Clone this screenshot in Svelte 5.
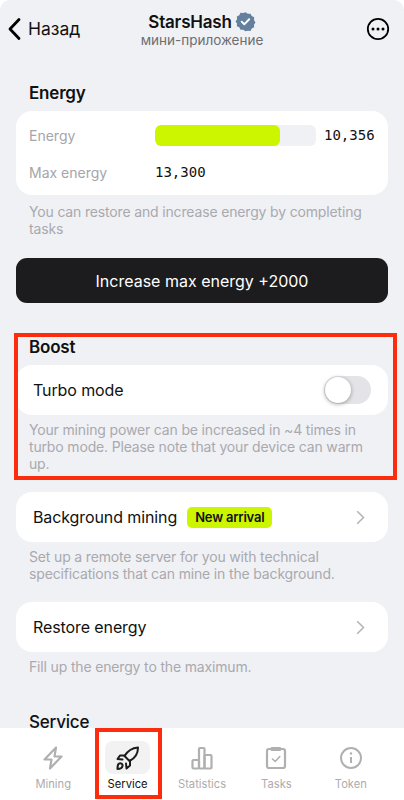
<script>
  const tabs = [
    { label: 'Mining', icon: 'bolt' },
    { label: 'Service', icon: 'rocket', active: true },
    { label: 'Statistics', icon: 'chart' },
    { label: 'Tasks', icon: 'task' },
    { label: 'Token', icon: 'info' }
  ];
</script>

<div class="screen">
  <header class="top">
    <div class="back">
      <svg width="14" height="24" viewBox="0 0 14 24"><path d="M12 2.5 L3 12 L12 21.5" fill="none" stroke="#000" stroke-width="2.8" stroke-linecap="round" stroke-linejoin="round"/></svg>
      <span>Назад</span>
    </div>
    <div class="title">
      <div class="name">StarsHash
        <svg width="21" height="21" viewBox="0 0 24 24"><path d="M12 1.5l2.6 1.7 3.1-.2 1.4 2.8 2.8 1.4-.2 3.1 1.7 2.7-1.7 2.6.2 3.1-2.8 1.4-1.4 2.8-3.1-.2L12 23l-2.6-1.7-3.1.2-1.4-2.8-2.8-1.4.2-3.1L.6 12l1.7-2.7-.2-3.1 2.8-1.4 1.4-2.8 3.1.2z" fill="#64809f"/><path d="M7.6 12.2l3 3 5.6-5.8" fill="none" stroke="#fff" stroke-width="2.2" stroke-linecap="round" stroke-linejoin="round"/></svg>
      </div>
      <div class="sub">мини-приложение</div>
    </div>
    <svg class="more" width="24" height="24" viewBox="0 0 24 24"><circle cx="12" cy="12" r="10.2" fill="none" stroke="#000" stroke-width="1.8"/><circle cx="7" cy="12" r="1.5"/><circle cx="12" cy="12" r="1.5"/><circle cx="17" cy="12" r="1.5"/></svg>
  </header>

  <main class="content">
    <h2 class="h-energy">Energy</h2>
    <section class="card stats">
      <div class="stat">
        <span class="lbl">Energy</span>
        <div class="bar"><div class="fill" style="width:{(10356 / 13300) * 100}%"></div></div>
        <span class="num">10,356</span>
      </div>
      <div class="stat">
        <span class="lbl">Max energy</span>
        <span class="num">13,300</span>
      </div>
    </section>
    <p class="note n-energy">You can restore and increase energy by completing tasks</p>
    <button class="cta">Increase max energy +2000</button>

    <h2 class="h-boost">Boost</h2>
    <section class="card row">
      <span>Turbo mode</span>
      <span class="toggle"><i></i></span>
    </section>
    <p class="note">Your mining power can be increased in ~4 times in turbo mode. Please note that your device can warm up.</p>

    <section class="card row gap1">
      <span class="rowmain">Background mining <b class="badge">New arrival</b></span>
      <svg class="chev" width="9" height="15" viewBox="0 0 9 15"><path d="M1.2 1.2 L7.5 7.5 L1.2 13.8" fill="none" stroke="#b3b3b8" stroke-width="1.5"/></svg>
    </section>
    <p class="note">Set up a remote server for you with technical specifications that can mine in the background.</p>

    <section class="card row gap2">
      <span>Restore energy</span>
      <svg class="chev" width="9" height="15" viewBox="0 0 9 15"><path d="M1.2 1.2 L7.5 7.5 L1.2 13.8" fill="none" stroke="#b3b3b8" stroke-width="1.5"/></svg>
    </section>
    <p class="note">Fill up the energy to the maximum.</p>

    <h2 class="h-service">Service</h2>
  </main>

  <nav class="tabs">
    {#each tabs as t}
      <div class="tab" class:active={t.active}>
        <div class="ico">
          {#if t.icon === 'bolt'}
            <svg width="24" height="26" viewBox="0 0 24 26"><path d="M15 2.5 L3.5 14.5 H10.5 L9 23.5 L20.5 11.5 H13.5 Z" fill="none" stroke="#b0b0b0" stroke-width="2.2" stroke-linejoin="round"/></svg>
          {:else if t.icon === 'rocket'}
            <svg width="26" height="26" viewBox="0 0 26 26" fill="none" stroke="#1c1c1c" stroke-width="2" stroke-linejoin="round" stroke-linecap="round"><path d="M23 2.5 C17 3 12.5 6 9.5 11 L14.5 16 C19.5 13.5 23 9 23 2.5 Z"/><path d="M10 10.5 L5 10.5 L2.5 14 L7.5 14.5"/><path d="M15 15.5 V20.5 L11.5 23.5 L11 18.5"/><path d="M3.5 19 C5.5 17.5 8 19 7.5 21 C7 23.5 4 24 2.5 24 C2.5 22 2.5 20 3.5 19 Z"/></svg>
          {:else if t.icon === 'chart'}
            <svg width="24" height="26" viewBox="0 0 24 26" fill="none" stroke="#b0b0b0" stroke-width="2.2" stroke-linejoin="round"><rect x="2.5" y="15" width="6.5" height="8.5" rx="1"/><rect x="9" y="3" width="5.5" height="20.5" rx="1"/><rect x="14.5" y="10" width="7" height="13.5" rx="1"/></svg>
          {:else if t.icon === 'task'}
            <svg width="22" height="26" viewBox="0 0 22 26" fill="none" stroke="#b0b0b0" stroke-width="2.2" stroke-linejoin="round" stroke-linecap="round"><rect x="2" y="4" width="18" height="19" rx="2"/><rect x="6.5" y="2.5" width="9" height="3" fill="#b0b0b0" stroke-width="1"/><path d="M7.5 14 L10.2 16.5 L14.8 11.5" stroke-width="1.6"/></svg>
          {:else}
            <svg width="24" height="24" viewBox="0 0 24 24" fill="none" stroke="#b0b0b0" stroke-width="2"><circle cx="12" cy="12" r="10"/><path d="M12 11 V17" stroke-width="2"/><circle cx="12" cy="7.5" r="1.2" fill="#b0b0b0" stroke="none"/></svg>
          {/if}
        </div>
        <span>{t.label}</span>
      </div>
    {/each}
  </nav>

  <div class="mark mark-boost"></div>
  <div class="mark mark-tab"></div>
</div>

<style>
  :global(body) { margin: 0; background: #fff; }
  .screen {
    position: relative; width: 404px; height: 800px; overflow: hidden;
    display: flex; flex-direction: column; background: #f0f1f5;
    border-radius: 10px 10px 0 0;
    font-family: Inter, "Liberation Sans", sans-serif; color: #111;
  }
  .top {
    flex: none; height: 56px; display: flex; align-items: center;
    justify-content: space-between; padding: 0 14px 0 7px; position: relative;
  }
  .back { display: flex; align-items: center; gap: 7px; font-size: 17.5px; margin-top: 1px; }
  .title { position: absolute; left: 0; right: 0; top: 11px; text-align: center; }
  .name {
    display: flex; justify-content: center; align-items: center; gap: 3px;
    font-size: 17px; font-weight: 600; line-height: 20px; letter-spacing: -0.2px;
  }
  .sub { font-size: 13.5px; line-height: 16px; color: #6d6d72; }
  .more { margin-top: 2px; position: relative; }
  .content { flex: 1; min-height: 0; padding: 0 16px; overflow: hidden; }
  h2 { margin: 0 0 0 13px; font-size: 17px; font-weight: 600; line-height: 20px; letter-spacing: -0.2px; }
  .h-energy { margin-top: 27px; margin-bottom: 8px; }
  .h-boost { margin-top: 34px; margin-bottom: 8px; }
  .h-service { margin-top: 41px; font-weight: 500; line-height: 12px; }
  .card { background: #fff; border-radius: 16px; }
  .stats { height: 84px; padding: 6px 12px 0 13px; box-sizing: border-box; display: flex; flex-direction: column; gap: 1px; }
  .stat { display: flex; align-items: center; height: 36px; font-size: 14px; }
  .lbl { width: 126px; flex: none; color: #a5a5aa; font-size: 14px; }
  .bar { width: 161px; height: 21px; background: #f0f1f5; border-radius: 6px; overflow: hidden; margin-right: 8px; }
  .fill { height: 100%; background: #ccf500; border-radius: 6px; }
  .num { font-family: "DejaVu Sans Mono", monospace; font-size: 14px; color: #111; }
  .note { margin: 6px 13px 0; font-size: 14px; line-height: 17px; color: #a9a9ae; letter-spacing: -0.16px; }
  .n-energy { margin-top: 8px; }
  .cta {
    display: block; width: 100%; height: 45px; margin-top: 21px; border: 0; border-radius: 11px;
    background: #1c1c1e; color: #fff; font: 400 16px Inter, "Liberation Sans", sans-serif;
  }
  .row {
    height: 50px; display: flex; align-items: center; justify-content: space-between;
    padding: 0 17px; font-size: 16px; letter-spacing: -0.1px; box-sizing: border-box;
  }
  .rowmain { display: flex; align-items: center; gap: 10px; }
  .chev { margin-right: 6px; }
  .badge {
    font-size: 13px; font-weight: 600; background: #ccf500; border-radius: 5px;
    line-height: 21px; padding: 0 8px; letter-spacing: -0.2px;
  }
  .gap1 { margin-top: 20px; }
  .gap2 { margin-top: 20px; }
  .toggle { width: 47px; height: 28px; border-radius: 14px; background: #e3e3e8; position: relative; }
  .toggle i {
    position: absolute; left: 1px; top: 1px; width: 26px; height: 26px; border-radius: 50%;
    background: #fff; box-shadow: 0 1px 4px rgba(0,0,0,.35);
  }
  .tabs {
    flex: none; height: 72px; background: #fff; display: flex;
    padding: 13px 16px 0; box-sizing: border-box; position: relative;
  }
  .tab {
    flex: 1; display: flex; flex-direction: column; align-items: center;
    font-size: 11.2px; color: #acacac;
  }
  .ico { width: 45px; height: 33px; display: flex; align-items: center; justify-content: center; border-radius: 8px; margin-bottom: 3px; }
  .active { color: #111; }
  .active .ico { background: #f2f2f2; }
  .mark { position: absolute; border: 4px solid #fb2d0e; box-sizing: border-box; }
  .mark-boost { left: 14px; top: 333px; width: 383px; height: 147px; }
  .mark-tab { left: 95px; top: 728px; width: 67px; height: 71px; }
</style>
